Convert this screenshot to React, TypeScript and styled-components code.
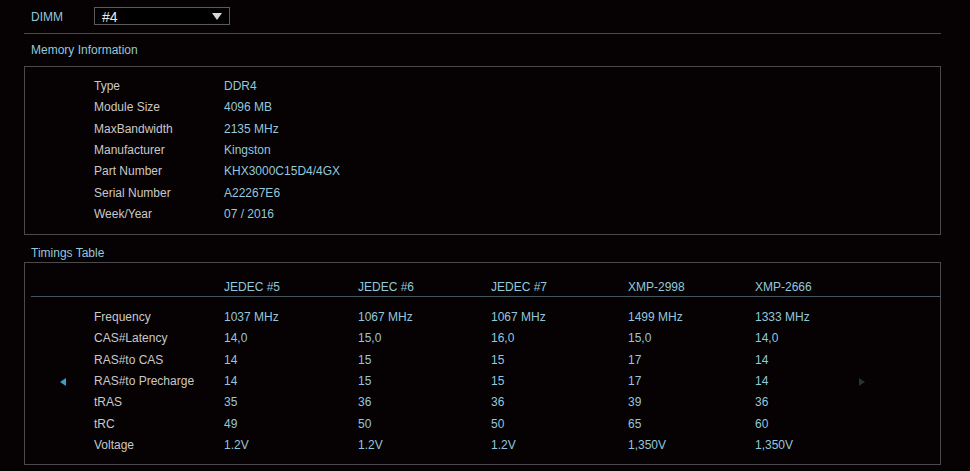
import React from "react";
import styled, { createGlobalStyle } from "styled-components";

const Global = createGlobalStyle`
  html, body { margin: 0; padding: 0; background: #060103; }
  body { font-family: "Liberation Sans", Arial, sans-serif; font-size: 12px; }
`;

const Page = styled.div`
  width: 917px;
  padding: 7px 0 0 24px;
  color: #c9c9c9;
`;

const TopBar = styled.div`
  display: flex;
  align-items: flex-start;
  height: 27px;
  border-bottom: 1px solid #4a4a4e;
  padding-left: 7px;
  box-sizing: border-box;
`;

const TopLabel = styled.div`
  width: 63px;
  height: 18px;
  padding-top: 1px;
  line-height: 18px;
  color: #93c8dc;
`;

const Select = styled.div`
  width: 136px;
  height: 18px;
  box-sizing: border-box;
  border: 1px solid #5c5c60;
  background: #000;
  display: flex;
  align-items: center;
  justify-content: space-between;
  padding: 1px 7px 0 7px;
  color: #ececec;
  font-size: 14px;
`;

const Caret = styled.span`
  width: 0;
  height: 0;
  border-left: 5px solid transparent;
  border-right: 5px solid transparent;
  border-top: 7px solid #d8d8d8;
`;

const SectionTitle = styled.div<{ $h: number; $top: number }>`
  height: ${(p) => p.$h}px;
  box-sizing: border-box;
  padding: ${(p) => p.$top}px 0 0 7px;
  line-height: 14px;
  color: #93c8dc;
`;

const Box = styled.div<{ $h: number }>`
  height: ${(p) => p.$h}px;
  box-sizing: border-box;
  border: 1px solid #4a4a4e;
`;

const InfoList = styled.div`
  display: grid;
  grid-template-columns: 130px auto;
  padding: 9px 0 0 69px;
`;

const Cell = styled.div<{ $value?: boolean }>`
  height: 21.33px;
  line-height: 21.33px;
  white-space: nowrap;
  color: ${(p) => (p.$value ? "#93c8dc" : "#c9c9c9")};
`;

const HeaderRow = styled.div`
  display: grid;
  grid-template-columns: 63px 130px 134px 133px 137px 127px 104px 1fr;
  margin-left: 6px;
  height: 34px;
  box-sizing: border-box;
  padding-top: 17px;
  border-bottom: 1px solid #44565e;
  color: #93c8dc;
  line-height: 14px;
`;

const TimingGrid = styled.div`
  display: grid;
  grid-template-columns: 69px 130px 134px 133px 137px 127px 104px 1fr;
  padding-top: 10px;
`;

const ArrowCell = styled.div<{ $col: number }>`
  grid-column: ${(p) => p.$col};
  grid-row: 1 / span 7;
  display: flex;
  align-items: center;
  justify-content: ${(p) => (p.$col === 1 ? "flex-end" : "flex-start")};
  padding-right: ${(p) => (p.$col === 1 ? "28px" : "0")};
`;

const Arrow = styled.span<{ $dir: "left" | "right"; $color: string }>`
  width: 0;
  height: 0;
  border-top: 4px solid transparent;
  border-bottom: 4px solid transparent;
  ${(p) =>
    p.$dir === "left"
      ? `border-right: 6px solid ${p.$color};`
      : `border-left: 6px solid ${p.$color};`}
`;

const info: [string, string][] = [
  ["Type", "DDR4"],
  ["Module Size", "4096 MB"],
  ["MaxBandwidth", "2135 MHz"],
  ["Manufacturer", "Kingston"],
  ["Part Number", "KHX3000C15D4/4GX"],
  ["Serial Number", "A22267E6"],
  ["Week/Year", "07 / 2016"],
];

const headers = ["JEDEC #5", "JEDEC #6", "JEDEC #7", "XMP-2998", "XMP-2666"];

const timings: [string, string[]][] = [
  ["Frequency", ["1037 MHz", "1067 MHz", "1067 MHz", "1499 MHz", "1333 MHz"]],
  ["CAS#Latency", ["14,0", "15,0", "16,0", "15,0", "14,0"]],
  ["RAS#to CAS", ["14", "15", "15", "17", "14"]],
  ["RAS#to Precharge", ["14", "15", "15", "17", "14"]],
  ["tRAS", ["35", "36", "36", "39", "36"]],
  ["tRC", ["49", "50", "50", "65", "60"]],
  ["Voltage", ["1.2V", "1.2V", "1.2V", "1,350V", "1,350V"]],
];

export default function App() {
  return (
    <>
      <Global />
      <Page>
        <TopBar>
          <TopLabel>DIMM</TopLabel>
          <Select>
            <span>#4</span>
            <Caret />
          </Select>
        </TopBar>
        <SectionTitle $h={32} $top={9}>Memory Information</SectionTitle>
        <Box $h={169}>
          <InfoList>
            {info.map(([k, v]) => (
              <React.Fragment key={k}>
                <Cell>{k}</Cell>
                <Cell $value>{v}</Cell>
              </React.Fragment>
            ))}
          </InfoList>
        </Box>
        <SectionTitle $h={27} $top={11}>Timings Table</SectionTitle>
        <Box $h={203}>
          <HeaderRow>
            <div />
            <div />
            {headers.map((h) => (
              <div key={h}>{h}</div>
            ))}
          </HeaderRow>
          <TimingGrid>
            <ArrowCell $col={1}>
              <Arrow $dir="left" $color="#3a9ec6" />
            </ArrowCell>
            {timings.map(([k, vals], r) => (
              <React.Fragment key={k}>
                <Cell style={{ gridColumn: 2, gridRow: r + 1 }}>{k}</Cell>
                {vals.map((v, i) => (
                  <Cell
                    key={i}
                    $value
                    style={{ gridColumn: i + 3, gridRow: r + 1 }}
                  >
                    {v}
                  </Cell>
                ))}
              </React.Fragment>
            ))}
            <ArrowCell $col={8}>
              <Arrow $dir="right" $color="#263436" />
            </ArrowCell>
          </TimingGrid>
        </Box>
      </Page>
    </>
  );
}
